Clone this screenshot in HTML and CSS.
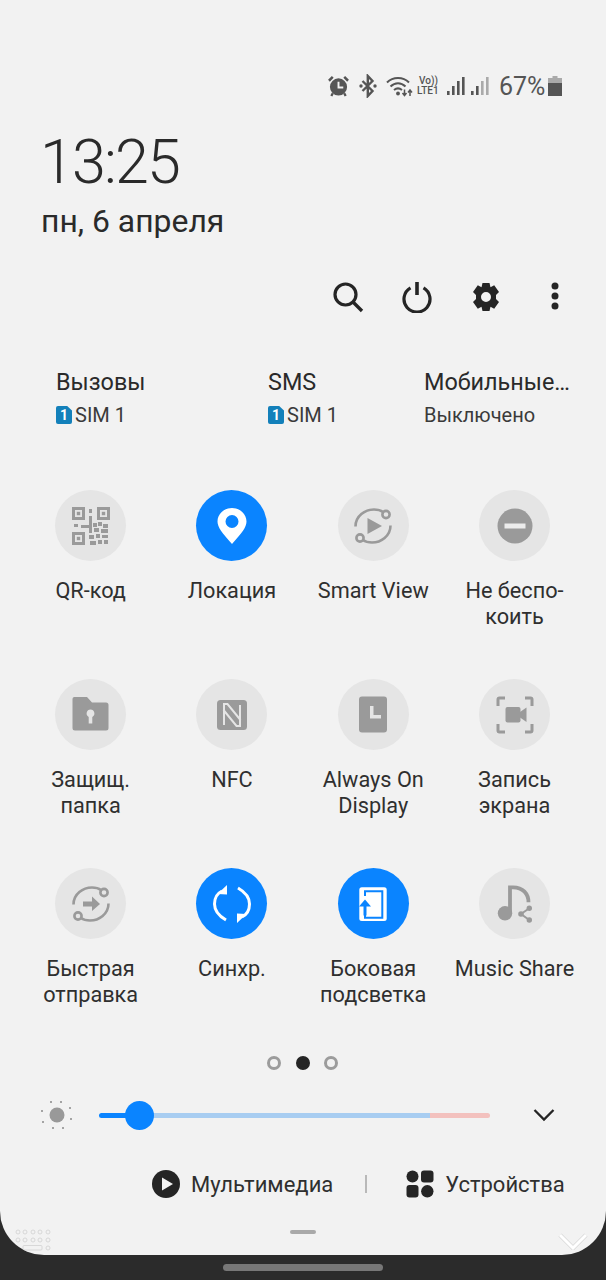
FILE: index.html
```html
<!DOCTYPE html>
<html lang="ru">
<head>
<meta charset="utf-8">
<title>Quick panel</title>
<link rel="stylesheet" href="styles.css">
</head>
<body>
<main class="panel">
  <div class="status">
    <svg class="st-alarm" viewBox="0 0 22 24"><path d="M1 6.5 5 2.5M21 6.5 17 2.5" stroke="#555" stroke-width="2.6" fill="none"/><path d="M5 19.5 3.5 22.5M17 19.5 18.5 22.5" stroke="#555" stroke-width="2.4"/><circle cx="11" cy="13" r="9" fill="#555"/><path d="M11 7.5V13.5H16" stroke="#f2f2f2" stroke-width="2" fill="none"/></svg>
    <svg class="st-bt" viewBox="0 0 18 24"><path d="M3.5 7 13.5 17 8.8 22V2L13.5 7 3.5 17" stroke="#555" stroke-width="2.4" fill="none"/><circle cx="2" cy="12" r="1.7" fill="#555"/><circle cx="16" cy="12" r="1.7" fill="#555"/></svg>
    <svg class="st-wifi" viewBox="0 0 27 22"><path d="M1 7.5C7 1.5 17 1.5 23 7.5M4.5 11.5C9 7.2 15 7.2 19.5 11.5M8 15C10.5 13 13.5 13 16 15" stroke="#555" stroke-width="2" fill="none"/><circle cx="12" cy="18.5" r="1.9" fill="#555"/><path d="M18.5 14.5V20M16.5 18 18.5 20.5 20.5 18M24 21V15.5M22 17.5 24 15 26 17.5" stroke="#555" stroke-width="1.5" fill="none"/></svg>
    <div class="volte"><span>Vo))</span><span>LTE1</span></div>
    <svg class="st-sig" viewBox="0 0 18 20"><rect x="0" y="15" width="2.6" height="4" fill="#555"/><rect x="5" y="10" width="2.6" height="9" fill="#555"/><rect x="10" y="5" width="2.6" height="14" fill="#555"/><rect x="15" y="1" width="2.6" height="18" fill="#555"/></svg>
    <svg class="st-sig st-sig2" viewBox="0 0 18 20"><rect x="0" y="15" width="2.6" height="4" fill="#555"/><rect x="5" y="10" width="2.6" height="9" fill="#555"/><rect x="10" y="5" width="2.6" height="14" fill="#aaa"/><rect x="15" y="1" width="2.6" height="18" fill="#aaa"/></svg>
    <span class="pct">67%</span>
    <svg class="st-bat" viewBox="0 0 14 20"><path d="M4.5 0H9.5V2H14V20H0V2H4.5Z" fill="#aaa"/><rect y="7" width="14" height="13" fill="#555"/></svg>
  </div>

  <div class="clock">13:25</div>
  <div class="date">пн, 6 апреля</div>

  <div class="actions">
    <svg class="act" viewBox="0 0 32 32"><circle cx="13.5" cy="13.5" r="10.5" stroke="#252525" stroke-width="3.2" fill="none"/><path d="M21 21 30 30" stroke="#252525" stroke-width="3.4"/></svg>
    <svg class="act" viewBox="0 0 32 32"><path d="M9.5 6.8A13 13 0 1 0 22.5 6.8" stroke="#252525" stroke-width="3.2" fill="none"/><path d="M16 1V14" stroke="#252525" stroke-width="3.6"/></svg>
    <svg class="act" viewBox="0 0 32 32"><path fill="#252525" fill-rule="evenodd" d="M12.5 2H19.5L20.5 6.2 24.2 4.2 29 11 26 14V18L29 21 24.2 27.8 20.5 25.8 19.5 30H12.5L11.5 25.8 7.8 27.8 3 21 6 18V14L3 11 7.8 4.2 11.5 6.2ZM16 11A5 5 0 1 0 16 21 5 5 0 1 0 16 11Z"/></svg>
    <svg class="act" viewBox="0 0 32 32"><circle cx="16" cy="5" r="3.5" fill="#252525"/><circle cx="16" cy="15" r="3.5" fill="#252525"/><circle cx="16" cy="25" r="3.5" fill="#252525"/></svg>
  </div>

  <div class="sims">
    <div class="sim sim-a">
      <div class="sim-title">Вызовы</div>
      <div class="sim-sub"><span class="badge">1</span>SIM 1</div>
    </div>
    <div class="sim sim-b">
      <div class="sim-title">SMS</div>
      <div class="sim-sub"><span class="badge">1</span>SIM 1</div>
    </div>
    <div class="sim">
      <div class="sim-title">Мобильные…</div>
      <div class="sim-sub">Выключено</div>
    </div>
  </div>

  <div class="tiles">
    <div class="tile">
      <div class="disc"><svg class="ic" viewBox="0 0 38 38">
        <g fill="#9a9a9a"><path fill-rule="evenodd" d="M0 0H13V13H0ZM3 3V10H10V3Z"/><rect x="4.8" y="4.8" width="3.4" height="3.4"/><path fill-rule="evenodd" d="M25 0H38V13H25ZM28 3V10H35V3Z"/><rect x="29.8" y="4.8" width="3.4" height="3.4"/><path fill-rule="evenodd" d="M0 25H13V38H0ZM3 28V35H10V28Z"/><rect x="4.8" y="29.8" width="3.4" height="3.4"/><rect x="17" y="2" width="3" height="4"/><rect x="17" y="9" width="3" height="4"/><rect x="2" y="17" width="4" height="3"/><rect x="9" y="18" width="8" height="3"/><rect x="17" y="12" width="3" height="14"/><rect x="21" y="16" width="4" height="4"/><rect x="26" y="15" width="4" height="4"/><rect x="31" y="17" width="5" height="4"/><rect x="22" y="21" width="5" height="4"/><rect x="29" y="22" width="7" height="4"/><rect x="17" y="28" width="5" height="4"/><rect x="24" y="27" width="4" height="4"/><rect x="30" y="28" width="6" height="3"/><rect x="18" y="34" width="6" height="4"/><rect x="26" y="33" width="4" height="4"/><rect x="32" y="33" width="4" height="4"/></g>
      </svg></div>
      <div class="lbl">QR-код</div>
    </div>
    <div class="tile">
      <div class="disc on"><svg class="ic" viewBox="0 0 38 38"><path fill="#fff" fill-rule="evenodd" d="M19 1C27 1 33.500 7 33.500 14.500 33.500 20 29 26 19 37 9 26 4.500 20 4.500 14.500 4.500 7 11 1 19 1ZM19 8A6.500 6.500 0 1 0 19 21 6.500 6.500 0 1 0 19 8Z"/></svg></div>
      <div class="lbl">Локация</div>
    </div>
    <div class="tile">
      <div class="disc"><svg class="ic" viewBox="0 0 38 38"><g fill="none" stroke="#9a9a9a" stroke-width="2.600"><path d="M1.500 19.500C1.500 9 11 2.500 20 2.500 24 2.500 27 3.500 29 5"/><path d="M36.500 18.500C36.500 29 27 35.500 18 35.500 14 35.500 11 34.500 9 33"/><circle cx="32" cy="7.500" r="3.600"/><circle cx="6" cy="31" r="3.600"/></g><path fill="#9a9a9a" d="M13.500 11 28 19 13.500 27Z"/></svg></div>
      <div class="lbl">Smart View</div>
    </div>
    <div class="tile">
      <div class="disc"><svg class="ic" viewBox="0 0 38 38"><circle cx="19" cy="19" r="17.500" fill="#9a9a9a"/><rect x="8.500" y="16.500" width="21" height="5" fill="#ececec"/></svg></div>
      <div class="lbl">Не беспо-<br>коить</div>
    </div>

    <div class="tile">
      <div class="disc"><svg class="ic" viewBox="0 0 38 38"><path fill="#9a9a9a" fill-rule="evenodd" d="M2 1H15L20 6.500H34A2.500 2.500 0 0 1 36.500 9V32A2.500 2.500 0 0 1 34 34.500H3A2.500 2.500 0 0 1 .5 32V3A2 2 0 0 1 2 1ZM18.500 13.500A4 4 0 0 0 16.700 21L16.700 27.500H20.300L20.300 21A4 4 0 0 0 18.500 13.500Z"/></svg></div>
      <div class="lbl">Защищ.<br>папка</div>
    </div>
    <div class="tile">
      <div class="disc"><svg class="ic" viewBox="0 0 38 38"><rect x="4" y="4" width="30" height="30" rx="3.500" fill="#9a9a9a"/><path d="M11 29V8H14.500L27.500 24M27 9V30H23.500L10.500 14" stroke="#e5e5e5" stroke-width="2" fill="none"/></svg></div>
      <div class="lbl">NFC</div>
    </div>
    <div class="tile">
      <div class="disc"><svg class="ic" viewBox="0 0 38 38"><path fill="#9a9a9a" fill-rule="evenodd" d="M8 .5H30A3 3 0 0 1 33 3.500V33.500A3 3 0 0 1 30 36.500H8A3 3 0 0 1 5 33.500V3.500A3 3 0 0 1 8 .5ZM16 10V22.500H27V19H19.500V10Z"/></svg></div>
      <div class="lbl">Always On<br>Display</div>
    </div>
    <div class="tile">
      <div class="disc"><svg class="ic" viewBox="0 0 38 38"><path d="M2 10V3.500A1.500 1.500 0 0 1 3.500 2H9M29 2H34.500A1.500 1.500 0 0 1 36 3.500V10M36 28V34.500A1.500 1.500 0 0 1 34.500 36H29M9 36H3.500A1.500 1.500 0 0 1 2 34.500V28" stroke="#9a9a9a" stroke-width="3" fill="none"/><rect x="9.500" y="11" width="15" height="15.500" rx="2" fill="#9a9a9a"/><path fill="#9a9a9a" d="M24 16 30.500 11.500V26L24 21.500Z"/></svg></div>
      <div class="lbl">Запись<br>экрана</div>
    </div>

    <div class="tile">
      <div class="disc"><svg class="ic" viewBox="0 0 38 38"><g fill="none" stroke="#9a9a9a" stroke-width="2.600"><path d="M1.500 19.500C1.500 9 11 2.500 20 2.500 24 2.500 27 3.500 29 5"/><path d="M36.500 18.500C36.500 29 27 35.500 18 35.500 14 35.500 11 34.500 9 33"/><circle cx="32" cy="7.500" r="3.600"/><circle cx="6" cy="31" r="3.600"/></g><path fill="#9a9a9a" d="M11 16.500H20V11.500L28 19 20 26V21.500H11Z"/></svg></div>
      <div class="lbl">Быстрая<br>отправка</div>
    </div>
    <div class="tile">
      <div class="disc on"><svg class="ic" viewBox="0 0 38 38"><g fill="none" stroke="#fff" stroke-width="3"><path d="M13 35C6 31 1.500 26 1.500 19 1.500 13 4 8.500 9 6"/><path d="M25 3C32 7 36.500 12 36.500 19 36.500 25 34 29.500 29 32"/></g><path fill="#fff" d="M14 0V9.500L4.500 9ZM24 38V28.500L33.500 29Z"/></svg></div>
      <div class="lbl">Синхр.</div>
    </div>
    <div class="tile">
      <div class="disc on"><svg class="ic" viewBox="0 0 38 38"><rect x="5.300" y="2.200" width="27.400" height="33.800" rx="2.500" fill="#fff"/><path d="M11 11V6.200H28.300V32.800H11V29" stroke="#0a84ff" stroke-width="2" fill="none"/><path d="M11 30.500V19" stroke="#0a84ff" stroke-width="3" fill="none"/><path fill="#0a84ff" d="M11 14.500 17 21.500H5Z"/></svg></div>
      <div class="lbl">Боковая<br>подсветка</div>
    </div>
    <div class="tile">
      <div class="disc"><svg class="ic" viewBox="0 0 38 38"><path fill="none" stroke="#9a9a9a" stroke-width="3.800" d="M14 28V2.300H17C27 2.300 32.500 9 32.500 17.300"/><circle cx="9" cy="28.300" r="7.200" fill="#9a9a9a"/><g fill="#9a9a9a"><circle cx="25" cy="29" r="2.800"/><circle cx="33.300" cy="23.300" r="2.700"/><circle cx="33.300" cy="35" r="2.700"/></g><path d="M33.300 23.300 25 29 33.300 35" stroke="#9a9a9a" stroke-width="2" fill="none"/></svg></div>
      <div class="lbl">Music Share</div>
    </div>
  </div>

  <div class="dots">
    <span class="dot"></span><span class="dot cur"></span><span class="dot"></span>
  </div>

  <div class="bright">
    <svg class="sun" viewBox="0 0 32 32"><circle cx="16" cy="16" r="7.500" fill="#999"/><g fill="#8a8a8a"><circle cx="10" cy="3" r="1"/><circle cx="20" cy="3" r="1"/><circle cx="29" cy="9" r="1"/><circle cx="30" cy="20" r="1"/><circle cx="22" cy="29" r="1"/><circle cx="12" cy="29" r="1"/><circle cx="2" cy="23" r="1"/><circle cx="1" cy="12" r="1"/></g></svg>
    <div class="track"><div class="fill"></div><div class="rest"></div><div class="hot"></div><div class="thumb"></div></div>
    <svg class="chev" viewBox="0 0 22 14"><path d="M1.500 2 11 11.500 20.500 2" stroke="#252525" stroke-width="2.300" fill="none"/></svg>
  </div>

  <div class="media">
    <svg class="m-play" viewBox="0 0 28 28"><circle cx="14" cy="14" r="14" fill="#252525"/><path fill="#f2f2f2" d="M10 7.500 21 14 10 20.500Z"/></svg>
    <span class="m-text">Мультимедиа</span>
    <span class="m-sep"></span>
    <svg class="m-dev" viewBox="0 0 28 28"><circle cx="6.500" cy="6.500" r="6" fill="#252525"/><rect x="15" y=".5" width="12.500" height="12" rx="3" fill="#252525"/><rect x=".5" y="15" width="12" height="12.500" rx="3" fill="#252525"/><circle cx="21.300" cy="21.300" r="6.200" fill="#252525"/></svg>
    <span class="m-text">Устройства</span>
  </div>

  <div class="handle"></div>

  <div class="foot">
    <svg class="kbd" viewBox="0 0 36 22"><g fill="none" stroke="#d0d0d0" stroke-width=".8"><circle cx="3" cy="3" r="2"/><circle cx="10" cy="3" r="2"/><circle cx="18" cy="3" r="2"/><circle cx="25" cy="3" r="2"/><circle cx="33" cy="3" r="2"/><circle cx="3" cy="11" r="2"/><circle cx="10" cy="11" r="2"/><circle cx="18" cy="11" r="2"/><circle cx="25" cy="11" r="2"/><circle cx="33" cy="11" r="2"/><rect x="8" y="16.500" width="19" height="4.500" rx="1"/><circle cx="33" cy="19" r="2"/></g></svg>
    <svg class="down" viewBox="0 0 30 18"><path d="M2 3 15 16 28 3" stroke="#d8d8d8" stroke-width="4.500" fill="none"/><path d="M2 3 15 16 28 3" stroke="#fff" stroke-width="3" fill="none"/></svg>
  </div>
</main>
<div class="home"></div>
</body>
</html>
```

FILE: styles.css
```css
* { box-sizing: border-box; }
html, body { margin: 0; padding: 0; }
body {
  width: 606px;
  height: 1280px;
  overflow: hidden;
  background: #2b2b2b;
  font-family: Roboto, "Liberation Sans", sans-serif;
  color: #252525;
}
.panel {
  position: relative;
  height: 1255px;
  background: #f2f2f2;
  border-radius: 0 0 44px 44px;
  padding-top: 72px;
  overflow: hidden;
}
.status {
  display: flex;
  align-items: center;
  height: 28px;
  padding-left: 328px;
  color: #555;
}
.st-alarm { width: 21px; height: 24px; }
.st-bt { width: 18px; height: 24px; margin-left: 10px; }
.st-wifi { width: 27px; height: 22px; margin-left: 9px; }
.volte {
  display: flex;
  flex-direction: column;
  width: 25px;
  margin-left: 4px;
  font-size: 10px;
  line-height: 10px;
  font-weight: 500;
  text-align: left;
}
.volte span:first-child { padding-left: 2px; }
.st-sig { width: 18px; height: 20px; margin-left: 5px; }
.st-sig2 { margin-left: 6px; }
.pct { font-size: 25px; line-height: 30px; margin-left: 10px; margin-top: 1px; font-weight: 400; width: 46px; color: #555; }
.st-bat { width: 14px; height: 20px; margin-left: 3px; }

.clock {
  margin: 30px 0 0 40px;
  height: 64px;
  font-size: 61px;
  line-height: 64px;
  font-weight: 300;
  letter-spacing: -1.800px;
  color: #2a2a2a;
}
.date {
  margin: 7px 0 0 41px;
  height: 39px;
  font-size: 31.900px;
  line-height: 40px;
  color: #2a2a2a;
}
.actions {
  display: flex;
  gap: 37px;
  margin: 37px 0 0 332px;
  height: 40px;
  align-items: center;
}
.act { width: 32px; height: 32px; }

.sims {
  display: flex;
  margin-top: 51px;
  height: 64px;
}
.sim { display: flex; flex-direction: column; }
.sim-a { margin-left: 56px; width: 212px; }
.sim-b { width: 156px; }
.sim-title { font-size: 23.400px; line-height: 28px; color: #2a2a2a; }
.sim-sub {
  display: flex;
  align-items: center;
  margin-top: 5px;
  font-size: 20px;
  line-height: 28px;
  color: #3a3a3a;
}
.badge {
  display: flex;
  align-items: center;
  justify-content: center;
  width: 16px;
  height: 18px;
  margin-right: 3px;
  background: #1380ba;
  color: #fff;
  font-size: 14px;
  line-height: 18px;
  font-weight: 700;
  border-radius: 2px;
  clip-path: polygon(0 0, 70% 0, 100% 25%, 100% 100%, 0 100%);
}

.tiles {
  display: grid;
  grid-template-columns: repeat(4, 141.3px);
  grid-auto-rows: 189px;
  margin: 58px 0 0 20px;
  height: 567px;
}
.tile { display: flex; flex-direction: column; align-items: center; }
.disc {
  display: flex;
  align-items: center;
  justify-content: center;
  flex: none;
  width: 71px;
  height: 71px;
  border-radius: 50%;
  background: #e5e5e5;
}
.disc.on { background: #0a84ff; }
.ic { width: 38px; height: 38px; }
.lbl {
  margin-top: 17px;
  font-size: 21.700px;
  line-height: 26px;
  text-align: center;
  white-space: nowrap;
  color: #2f2f2f;
}

.dots {
  display: flex;
  justify-content: center;
  gap: 14.500px;
  margin: -1px 0 0 0;
  height: 14px;
  padding-right: 1px;
}
.dot {
  width: 14px;
  height: 14px;
  border-radius: 50%;
  border: 3px solid #9c9c9c;
}
.dot.cur { background: #252525; border-color: #252525; }

.bright {
  display: flex;
  align-items: center;
  height: 32px;
  margin-top: 29px;
  padding-left: 41px;
}
.sun { width: 32px; height: 32px; }
.track {
  position: relative;
  display: flex;
  width: 391px;
  height: 5px;
  margin-left: 26px;
  border-radius: 3px;
  overflow: visible;
}
.fill { width: 40px; background: #0a84ff; border-radius: 3px 0 0 3px; }
.rest { width: 291px; background: #a8cdf1; }
.hot { width: 60px; background: #f3c1be; border-radius: 0 3px 3px 0; }
.thumb {
  position: absolute;
  left: 26px;
  top: -12px;
  width: 29px;
  height: 29px;
  border-radius: 50%;
  background: #0a84ff;
}
.chev { width: 22px; height: 14px; margin-left: 43px; }

.media {
  display: flex;
  align-items: center;
  height: 30px;
  margin-top: 38px;
  padding-left: 152px;
}
.m-play { width: 28px; height: 28px; }
.m-text { font-size: 22px; line-height: 30px; padding-top: 1px; color: #2f2f2f; margin-left: 11px; }
.m-sep { width: 2px; height: 18px; background: #b9b9b9; margin: 0 39px 0 32px; }
.m-dev { width: 28px; height: 28px; }

.handle {
  width: 26px;
  height: 4px;
  margin: 31px 0 0 290px;
  border-radius: 2px;
  background: #a9a9a9;
}
.foot {
  display: flex;
  justify-content: space-between;
  align-items: flex-start;
  margin-top: -5px;
  padding: 0 18px 0 15px;
}
.kbd { width: 36px; height: 22px; }
.down { width: 30px; height: 18px; margin-top: 3px; }

.home {
  width: 160px;
  height: 7px;
  margin: 9px 0 0 223px;
  border-radius: 3.500px;
  background: #777;
}
```
